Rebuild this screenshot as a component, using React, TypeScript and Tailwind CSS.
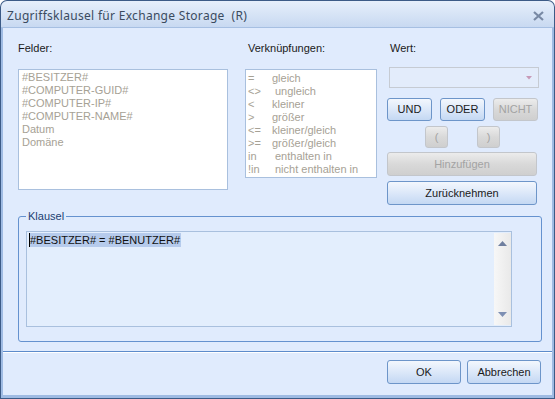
const felder = ["#BESITZER#", "#COMPUTER-GUID#", "#COMPUTER-IP#", "#COMPUTER-NAME#", "Datum", "Domäne"];

const ops: [string, string, number][] = [
  ["=", "gleich", 24],
  ["<>", "ungleich", 27],
  ["<", "kleiner", 24],
  [">", "größer", 24],
  ["<=", "kleiner/gleich", 24],
  [">=", "größer/gleich", 24],
  ["in", "enthalten in", 27],
  ["!in", "nicht enthalten in", 27],
];

function Btn({ label, className, disabled }: { label: string; className: string; disabled?: boolean }) {
  return (
    <div
      className={
        "flex items-center justify-center rounded-[3px] border leading-none font-normal " +
        (disabled
          ? "border-[#c3c6cb] bg-gradient-to-b from-[#ececec] via-[#d9d9d9] to-[#cfcfcf] text-[#a3a3a3] "
          : "border-[#6d95c9] bg-gradient-to-b from-[#f3f7fd] via-[#dce8f9] to-[#c4d8f3] text-[#1a1a1a] ") +
        className
      }
    >
      {label}
    </div>
  );
}

export default function App() {
  return (
    <div className="w-[555px] h-[399px] bg-[#3c5b87] rounded-t-[7px] p-px flex flex-col overflow-hidden text-[11px] leading-[13px] font-normal font-['Liberation_Sans',sans-serif]">
      {/* title bar */}
      <div className="h-[27px] shrink-0 rounded-t-[6px] bg-gradient-to-b from-[#e6effb] to-[#c8d9f1] border-b border-[#a6bfe2] flex items-center justify-between pl-[6px] pr-[10px] pt-[3px]">
        <span className="text-[12px] text-[#3b4b5f] font-['Noto_Sans',sans-serif] tracking-[0.3px]">Zugriffsklausel für Exchange Storage&nbsp; (R)</span>
        <svg width="11" height="10" viewBox="0 0 11 10">
          <path d="M1 1 L10 9 M10 1 L1 9" stroke="#7889a4" strokeWidth="2.2" />
        </svg>
      </div>

      {/* body */}
      <div className="flex-1 bg-[#e0ebfd] border-l-2 border-r-2 border-b-[3px] border-[#9fbbe3] flex flex-col">
        <div className="flex pl-[15px] pt-[14px]">
          {/* Felder */}
          <div className="w-[210px] flex flex-col">
            <span className="text-[#1a1a1a]">Felder:</span>
            <div className="mt-[14px] h-[121px] bg-white border border-[#a9c0de] pl-[3px] pt-[1px] text-[#a6a195]">
              {felder.map((f) => (
                <div key={f} className="h-[13px]">{f}</div>
              ))}
            </div>
          </div>

          {/* Verknüpfungen */}
          <div className="w-[132px] ml-[17px] flex flex-col">
            <span className="text-[#1a1a1a] pl-[3px]">Verknüpfungen:</span>
            <div className="mt-[14px] h-[109px] bg-white border border-[#a9c0de] pl-[2px] pt-[2px] text-[#a6a195]">
              {ops.map(([o, d, w]) => (
                <div key={o} className="h-[13px] flex">
                  <span className="shrink-0" style={{ width: w }}>{o}</span>
                  <span>{d}</span>
                </div>
              ))}
            </div>
          </div>

          {/* Wert */}
          <div className="w-[151px] ml-[10px] flex flex-col">
            <span className="text-[#1a1a1a] pl-[3px]">Wert:</span>
            <div className="mt-[12px] ml-[2px] w-[150px] h-[21px] border border-[#c6cbd3] bg-[#e3ecfb] flex items-center justify-end pr-[6px]">
              <svg width="6" height="4" viewBox="0 0 6 4">
                <path d="M0 0 H6 L3 3.5 Z" fill="#c79ab8" />
              </svg>
            </div>
            <div className="mt-[10px] flex gap-[8px] h-[23px]">
              <Btn label="UND" className="w-[45px]" />
              <Btn label="ODER" className="w-[45px]" />
              <Btn label="NICHT" className="w-[45px]" disabled />
            </div>
            <div className="mt-[5px] flex h-[22px] pl-[38px] gap-[29px]">
              <Btn label="(" className="w-[23px]" disabled />
              <Btn label=")" className="w-[23px]" disabled />
            </div>
            <Btn label="Hinzufügen" className="mt-[4px] w-[150px] h-[24px]" disabled />
            <Btn label="Zurücknehmen" className="mt-[5px] w-[150px] h-[24px]" />
          </div>
        </div>

        {/* Klausel */}
        <div className="relative mt-[11px] ml-[15px] w-[524px] h-[126px] border border-[#6592cf] rounded-[3px] pl-[7px] pt-[14px]">
          <span className="absolute left-[7px] top-[-7px] bg-[#e0ebfd] px-[2px] text-[#1c3f72]">Klausel</span>
          <div className="w-[486px] h-[96px] border border-[#a9c0de] bg-[#e3eefd] flex">
            <div className="flex-1 pl-[2px] pt-[1px]">
              <span className="inline-block bg-[#b6cbec] text-[#111] h-[14px] leading-[14px] pr-[1px] border-l border-black">#BESITZER# = #BENUTZER#</span>
            </div>
            <div className="w-[17px] my-px bg-gradient-to-r from-[#f7f7f7] to-[#e9e9e9] flex flex-col items-center justify-between py-[8px]">
              <svg width="9" height="5" viewBox="0 0 9 5">
                <path d="M0 5 L4.5 0 L9 5 Z" fill="#6f7f9f" />
              </svg>
              <svg width="9" height="5" viewBox="0 0 9 5">
                <path d="M0 0 L9 0 L4.5 5 Z" fill="#7d8fb3" />
              </svg>
            </div>
          </div>
        </div>

        {/* separator */}
        <div className="mt-[9px] border-t border-[#5d8bcb] border-b border-b-white" />

        {/* footer buttons */}
        <div className="flex justify-end gap-[6px] pr-[11px] mt-[7px]">
          <Btn label="OK" className="w-[74px] h-[24px]" />
          <Btn label="Abbrechen" className="w-[74px] h-[24px]" />
        </div>
      </div>
    </div>
  );
}
